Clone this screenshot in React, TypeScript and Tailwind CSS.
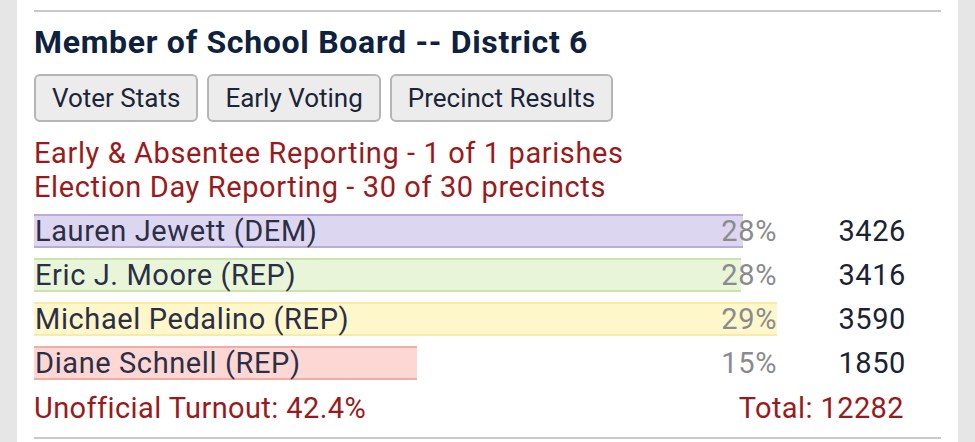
const candidates = [
  { name: "Lauren Jewett (DEM)", pct: "28%", votes: 3426, bar: "bg-[#ddd6f1] border-[#b9acdc]" },
  { name: "Eric J. Moore (REP)", pct: "28%", votes: 3416, bar: "bg-[#e8f5d8] border-[#cbe4ab]" },
  { name: "Michael Pedalino (REP)", pct: "29%", votes: 3590, bar: "bg-[#fdf7cb] border-[#f6eca6]" },
  { name: "Diane Schnell (REP)", pct: "15%", votes: 1850, bar: "bg-[#fdd7d4] border-[#f1aca6]" },
];

const maxVotes = Math.max(...candidates.map((c) => c.votes));

export default function App() {
  return (
    <div className="w-[975px] h-[442px] bg-[#e6e6e6] flex justify-center font-['Roboto',sans-serif] overflow-hidden">
      <div className="w-[941px] h-full bg-white px-[17px] pt-[10px]">
        <div className="h-[2px] bg-[#c9c9c9]" />
        <h2 className="mt-[12px] text-[32px] leading-[36px] font-bold tracking-[0.7px] text-[#0e213d]">
          Member of School Board -- District 6
        </h2>
        <div className="mt-[14px] flex gap-[9px]">
          {["Voter Stats", "Early Voting", "Precinct Results"].map((b) => (
            <button
              key={b}
              className="h-[48px] px-[16px] bg-[#ececec] border-2 border-[#b5b5b5] rounded-[6px] text-[26px] text-[#1b2538]"
            >
              {b}
            </button>
          ))}
        </div>
        <div className="mt-[14px] text-[29px] leading-[34px] tracking-[0.6px] text-[#9a1a1c]">
          <div>Early &amp; Absentee Reporting - 1 of 1 parishes</div>
          <div>Election Day Reporting - 30 of 30 precincts</div>
        </div>
        <div className="mt-[10px] flex flex-col gap-[10px]">
          {candidates.map((c) => (
            <div key={c.name} className="flex h-[34px] items-center">
              <div className="relative w-[743px] h-full">
                <div
                  className={`absolute left-0 top-0 h-full border-y-2 ${c.bar}`}
                  style={{ width: `${(c.votes / maxVotes) * 100}%` }}
                />
                <div className="relative h-full flex items-center justify-between text-[29px] leading-none tracking-[0.6px]">
                  <span className="text-[#2b2f45] pl-[1px]">{c.name}</span>
                  <span className="text-[#8b8b8b]">{c.pct}</span>
                </div>
              </div>
              <div className="w-[129px] text-right text-[29px] leading-none tracking-[0.6px] text-[#1b2333]">{c.votes}</div>
            </div>
          ))}
        </div>
        <div className="mt-[11px] w-[870px] flex justify-between text-[29px] leading-[34px] tracking-[0.4px] text-[#9a1a1c]">
          <span>Unofficial Turnout: 42.4%</span>
          <span>Total: 12282</span>
        </div>
        <div className="mt-[12px] h-[2px] bg-[#c9c9c9]" />
      </div>
    </div>
  );
}
